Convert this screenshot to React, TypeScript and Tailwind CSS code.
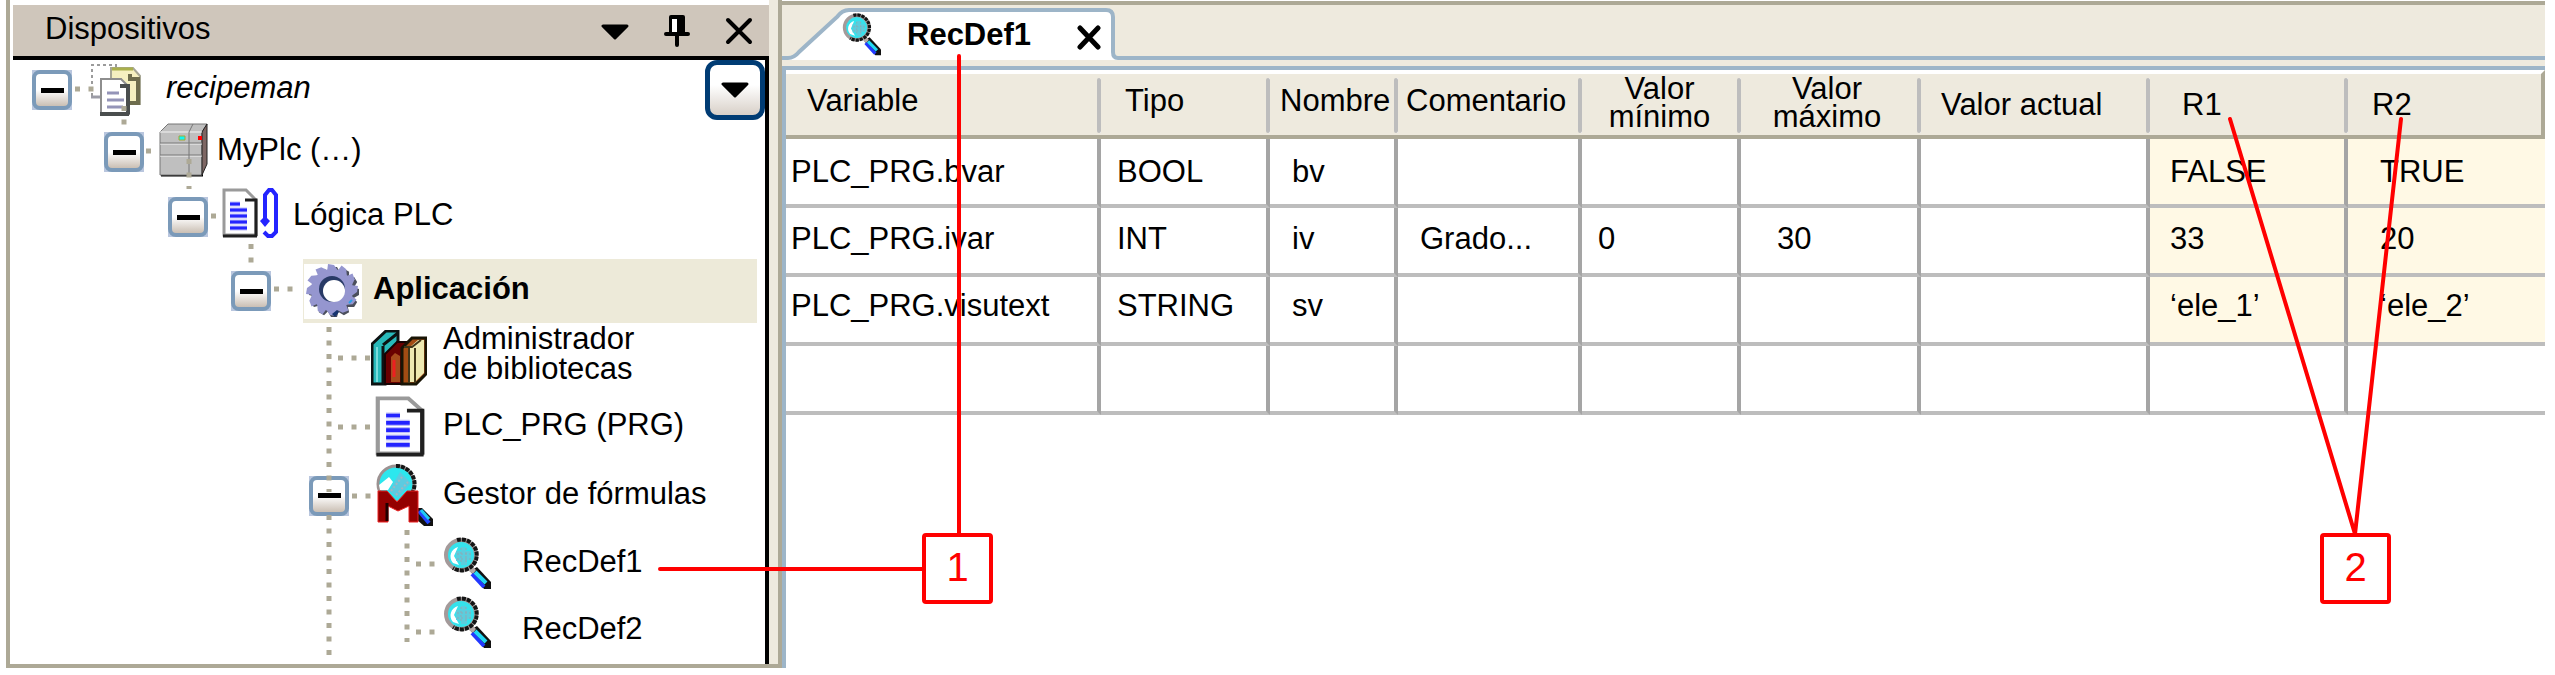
import { useState, type ReactNode } from 'react';
import clsx from 'clsx';

type Column = { key: string; label: string; head: string; body: string; recipe?: boolean };

const COLUMNS: Column[] = [
  { key: 'variable', label: 'Variable', head: 'w-[315px] pl-[21px] pb-2 text-left', body: 'pl-[5px]' },
  { key: 'type', label: 'Tipo', head: 'w-[169px] pl-6 pb-2 text-left', body: 'pl-4' },
  { key: 'name', label: 'Nombre', head: 'w-[128px] pl-2.5 pb-2 text-left', body: 'pl-[22px]' },
  { key: 'comment', label: 'Comentario', head: 'w-[184px] pl-2 pb-2 text-left', body: 'pl-[22px]' },
  { key: 'min', label: 'Valor mínimo', head: 'w-[159px] pl-3 pr-4 pb-1 text-center leading-[28px]', body: 'pl-4' },
  { key: 'max', label: 'Valor máximo', head: 'w-[180px] pl-6 pr-8 pb-1 text-center leading-[28px]', body: 'pl-9' },
  { key: 'current', label: 'Valor actual', head: 'w-[229px] pl-5 text-left', body: 'pl-5' },
  { key: 'r1', label: 'R1', head: 'w-[198px] pl-8 text-left', body: 'pl-5', recipe: true },
  { key: 'r2', label: 'R2', head: 'pl-6 text-left', body: 'pl-8', recipe: true },
];

const ROWS: { pad: string; values: Record<string, string> }[] = [
  { pad: 'pb-0', values: { variable: 'PLC_PRG.bvar', type: 'BOOL', name: 'bv', r1: 'FALSE', r2: 'TRUE' } },
  { pad: 'pb-1', values: { variable: 'PLC_PRG.ivar', type: 'INT', name: 'iv', comment: 'Grado...', min: '0', max: '30', r1: '33', r2: '20' } },
  { pad: 'pb-2', values: { variable: 'PLC_PRG.visutext', type: 'STRING', name: 'sv', r1: '‘ele_1’', r2: '‘ele_2’' } },
  { pad: 'pb-0', values: {} },
];

function Magnifier({ className }: { className: string }) {
  return (
    <svg className={className} viewBox="0 0 48 53" preserveAspectRatio="none" aria-hidden="true">
      <path d="M27 34L34 30L48 45V52H41Z" fill="#111" />
      <path d="M26 34l4-4 3 3-3 4z" fill="#b5a9a6" />
      <path d="M29 37L41 50" stroke="#2238ff" strokeWidth="4" />
      <path d="M32 35L43 46" stroke="#22d8f2" strokeWidth="4" />
      <circle cx="18" cy="18" r="15" fill="#35e2ec" stroke="#a49a9a" strokeWidth="4" />
      <path d="M14 3A15.500 15.500 0 1 1 10 31" fill="none" stroke="#151515" strokeWidth="4" strokeDasharray="4 1" />
      <path d="M15 10C8 12 5 20 10 26l6 2-5-9z" fill="#fff" />
      <path d="M13 14h5v-4h5v4h5v9h-4v5h-6v-4h-5z" fill="#5ccddd" />
      <path d="M14 17h14M14 22h14M18 11v16M23 11v16" stroke="#8fa9b5" strokeWidth="1" strokeDasharray="2 2" />
    </svg>
  );
}

function ProjectIcon() {
  return (
    <svg className="h-[52px] w-[50px]" viewBox="0 0 50 52" aria-hidden="true">
      <path d="M1 32V1h24v4" fill="none" stroke="#9b9b9b" strokeWidth="2" strokeDasharray="3 3" />
      <path d="M0 33h10" stroke="#9c9ca6" strokeWidth="3" />
      <path d="M20 4h22l7 8v28H20z" fill="#f5f0c0" stroke="#a7a795" strokeWidth="2" />
      <path d="M21 5h21M21 16h10" stroke="#aab04c" strokeWidth="3" />
      <path d="M39 10v5h8v24H38" fill="none" stroke="#6e6d4d" strokeWidth="4" />
      <path d="M10 15h20l8 8v27H10z" fill="#fff" stroke="#8e8e8e" strokeWidth="2" />
      <path d="M29 22h8v28M9 50h29" fill="none" stroke="#4a4e4e" strokeWidth="4" />
      <path d="M16 29h12M16 36h17M16 43h16" stroke="#9494b8" strokeWidth="3" />
    </svg>
  );
}

function PlcIcon() {
  return (
    <svg className="h-[54px] w-[50px]" viewBox="0 0 50 54" aria-hidden="true">
      <path d="M2 52h42" stroke="#000" strokeWidth="3" />
      <path d="M1 9L9 1h39l-5 8v43H1z" fill="#bfbfbf" stroke="#777" />
      <path d="M43 9l5-8v40l-5 11z" fill="#7d6663" stroke="#222" />
      <path d="M1 9h42M1 21h42M1 33h42" stroke="#f4f4f4" />
      <path d="M1 20h42M1 32h42M30 9v43M30 9l4-8" fill="none" stroke="#777" />
      <path d="M20 13h6v4h-6z" fill="#10f5f5" stroke="#a5a832" />
      <path d="M39 13h4v4h-4z" fill="#f00" />
    </svg>
  );
}

function DocPage({ logic }: { logic?: boolean }) {
  return (
    <svg className={logic ? 'h-[50px] w-[56px]' : 'h-[61px] w-[50px]'} viewBox={logic ? '0 0 56 50' : '0 0 36 50'} preserveAspectRatio="none" aria-hidden="true">
      <path d="M2 2h22l10 10v35H2z" fill="#fff" stroke="#9a9a9a" strokeWidth="3" />
      <path d="M23 12h11v36" fill="none" stroke="#202020" strokeWidth="3" />
      <path d="M1 48h34" stroke="#202020" strokeWidth="3" />
      <path d="M8 16h10M8 22h17M8 28h17M8 34h17M8 40h17" stroke="#bdbdf8" strokeWidth="5" />
      <path d="M8 16h10M8 22h17M8 28h17M8 34h17M8 40h17" stroke="#2424ff" strokeWidth="3" />
      {logic && (
        <>
          <path d="M43 34V7l4-5h3l4 5v37l-4 4h-4l-4-4" fill="none" stroke="#2424ff" strokeWidth="4" />
          <path d="M38 33l5-5 5 5-5 6z" fill="#2424ff" />
        </>
      )}
    </svg>
  );
}

function GearIcon() {
  const teeth = [0, 30, 60, 90, 120, 150, 180, 210, 240, 270, 300, 330];
  return (
    <svg className="h-[55px] w-[58px] bg-white" viewBox="0 0 58 55" aria-hidden="true">
      <g fill="#4b4f5c" transform="translate(2 2)">
        {teeth.map((a) => <path key={a} d="M23 8l2-7h6l4 7z" transform={`rotate(${a} 28 26)`} />)}
        <circle cx="28" cy="26" r="20" />
      </g>
      <g fill="#9596cf">
        {teeth.map((a) => <path key={a} d="M23 8l1-8 6 1 5 7z" transform={`rotate(${a} 28 26)`} />)}
        <circle cx="28" cy="26" r="21" />
      </g>
      <circle cx="28" cy="25" r="13" fill="#283a66" />
      <circle cx="30" cy="27" r="11" fill="#fff" />
      <path d="M28 50l5-4 2 2-4 5z" fill="#17346e" />
      <path d="M45 39l3-3" stroke="#2da1e8" strokeWidth="2" />
    </svg>
  );
}

function BooksIcon() {
  return (
    <svg className="h-[56px] w-[56px]" viewBox="0 0 56 56" aria-hidden="true">
      <path d="M1 14L15 1h12v18L14 34v20H1z" fill="#28b9ba" stroke="#0c1212" strokeWidth="3" />
      <path d="M6 17v35" stroke="#79dddd" strokeWidth="2" />
      <path d="M12 15L27 3M12 16v38" stroke="#0c1212" strokeWidth="3" />
      <path d="M14 24l12-12h9v42H14z" fill="#680000" stroke="#160404" strokeWidth="2" />
      <path d="M20 27l4-4 5 3v26h-9z" fill="#a64b1c" />
      <path d="M23 30v17" stroke="#ee2020" strokeWidth="3" />
      <path d="M31 18L41 8h14v36L45 54H31z" fill="#a34c13" stroke="#191405" strokeWidth="3" />
      <path d="M38 18l9-8h6v33l-9 9h-6z" fill="#eee9b1" />
      <path d="M33 17h8l9-7M44 18v35M38 18v35" fill="none" stroke="#423719" strokeWidth="2" />
    </svg>
  );
}

function RecipeManagerIcon() {
  return (
    <svg className="h-[63px] w-[58px]" viewBox="0 0 58 63" aria-hidden="true">
      <path d="M41 44h6l11 11v7h-9l-8-7z" fill="#111" />
      <path d="M44 47l10 12" stroke="#2145ff" strokeWidth="4" />
      <path d="M46 46l8 9" stroke="#20ccf4" strokeWidth="3" />
      <circle cx="21" cy="20" r="18" fill="#2ce7ee" stroke="#9c9191" strokeWidth="3" />
      <path d="M21 2a18 18 0 0 1 14 30" fill="none" stroke="#161616" strokeWidth="4" strokeDasharray="4 1" />
      <path d="M4 21l10-8 4 5-5 8H5z" fill="#fff" />
      <path d="M14 27L25 8l11 11-13 15z" fill="#5ccbe0" />
      <path d="M16 27l11-14M21 31l12-13" stroke="#a0b8c2" strokeWidth="2" strokeDasharray="2 2" />
      <path d="M3 27h9l10 11 10-11h11v31h-9V42L23 47 13 42v16H3z" fill="#940000" stroke="#e82323" strokeWidth="1" />
      <path d="M12 39v18" stroke="#200000" strokeWidth="3" />
    </svg>
  );
}

function Triangle() {
  return (
    <svg className="h-[17px] w-[28px]" viewBox="0 0 28 17" aria-hidden="true">
      <path d="M2 2h24L14 14z" stroke="#000" strokeWidth="3" strokeLinejoin="round" />
    </svg>
  );
}

function Toggle({ label }: { label: string }) {
  return (
    <button type="button" aria-label={`Contraer ${label}`} className="flex size-10 shrink-0 items-center justify-center bg-[#b9c6de]">
      <span className="flex size-10 items-center justify-center rounded-lg border-4 border-[#7b9ab9] bg-linear-to-b from-white from-50% to-[#cabfb4]">
        <span className="h-[5px] w-[23px] bg-black" />
      </span>
    </button>
  );
}

function TreeRow({ className, children }: { className: string; children: ReactNode }) {
  return (
    <li role="treeitem" className={clsx('flex items-center', className)}>
      {children}
    </li>
  );
}

// Dotted guides that join each toggle with its children
function TreeGuides() {
  return (
    <svg className="pointer-events-none absolute left-0 top-0 h-[605px] w-[500px]" fill="none" stroke="#ada996" strokeWidth="5" strokeDasharray="5 8.500" aria-hidden="true">
      <path d="M62 29h20M111 46v20M133 91h5M176 99v30M198 156h5M238 184v20" />
      <path d="M261 229h20M316 267v165M325 298h32M325 367h32M339 436h20M316 455v140" />
      <path d="M394 470v112M403 504h20M403 572h20" />
    </svg>
  );
}

function DevicesPanel() {
  return (
    <aside className="ml-1.5 w-[776px] shrink-0 border-4 border-t-0 border-[#ada996]">
      <div className="border-r-[9px] border-[#eeeade] pl-[3px] pt-[5px]">
        <header className="flex h-[51px] items-center bg-[#cfc6bb] pl-8 pr-4">
          <h2 className="flex-1 pb-1">Dispositivos</h2>
          <div className="flex items-center gap-[35px]">
            <button type="button" aria-label="Menú" className="pt-1"><Triangle /></button>
            <button type="button" aria-label="Fijar">
              <svg className="h-[34px] w-[26px]" viewBox="0 0 26 34" aria-hidden="true">
                <path d="M5 3q0-2 2-2h12q2 0 2 2v16h-16z" />
                <path d="M2 20h22M13 20v11" stroke="#000" strokeWidth="4" strokeLinecap="round" />
                <path d="M8 5h5v13H8z" fill="#fff" />
              </svg>
            </button>
            <button type="button" aria-label="Cerrar">
              <svg className="size-[28px]" viewBox="0 0 28 28" aria-hidden="true">
                <path d="M3 3l22 22M25 3L3 25" stroke="#000" strokeWidth="4" strokeLinecap="round" />
              </svg>
            </button>
          </div>
        </header>
        <div className="relative border-r-4 border-t-4 border-black">
          <ul role="tree" aria-label="Dispositivos">
            <TreeRow className="h-[60px] pl-[19px]">
              <Toggle label="recipeman" />
              <span className="ml-[19px]"><ProjectIcon /></span>
              <span className="ml-[25px] flex-1 pb-1 italic">recipeman</span>
              <button type="button" aria-label="Opciones del proyecto" className="flex size-[60px] items-center justify-center rounded-xl border-[5px] border-[#003c74] bg-linear-to-b from-white from-40% to-[#d8d0c8]">
                <Triangle />
              </button>
            </TreeRow>
            <TreeRow className="h-[64px] pl-[91px]">
              <Toggle label="MyPlc" />
              <span className="ml-[15px] mr-2 pb-1"><PlcIcon /></span>
              <span className="pb-1">MyPlc (…)</span>
            </TreeRow>
            <TreeRow className="h-[66px] pl-[155px]">
              <Toggle label="Lógica PLC" />
              <span className="ml-[14px] mr-[15px] pb-2"><DocPage logic /></span>
              <span className="pb-1">Lógica PLC</span>
            </TreeRow>
            <TreeRow className="mt-[9px] h-[64px] pl-[218px] pr-2">
              <Toggle label="Aplicación" />
              <span className="ml-8 flex h-[64px] flex-1 items-center bg-[#edead9] pl-px font-bold">
                <span className="mr-[11px]"><GearIcon /></span>
                <span className="pb-1">Aplicación</span>
              </span>
            </TreeRow>
            <TreeRow className="h-[69px] pl-[358px]">
              <BooksIcon />
              <span className="ml-4 pb-2 leading-[30px]">Administrador<br />de bibliotecas</span>
            </TreeRow>
            <TreeRow className="h-[69px] pl-[362px]">
              <DocPage />
              <span className="ml-[18px] pb-1">PLC_PRG (PRG)</span>
            </TreeRow>
            <TreeRow className="h-[69px] pl-[296px]">
              <Toggle label="Gestor de fórmulas" />
              <span className="ml-[26px] mr-[10px]"><RecipeManagerIcon /></span>
              <span className="pb-1">Gestor de fórmulas</span>
            </TreeRow>
            <TreeRow className="h-[67px] pl-[430px]">
              <Magnifier className="h-[53px] w-[48px]" />
              <span className="ml-[31px] pb-1">RecDef1</span>
            </TreeRow>
            <TreeRow className="h-[67px] pl-[430px]">
              <Magnifier className="-mt-4 h-[53px] w-[48px]" />
              <span className="ml-[31px] pb-1">RecDef2</span>
            </TreeRow>
          </ul>
          <TreeGuides />
        </div>
      </div>
    </aside>
  );
}

function TabStrip() {
  return (
    <div role="tablist" className="relative h-[55px] border-b-4 border-[#9db5c8] bg-[#eeeade]">
      <div className="relative flex h-[55px] w-[336px] items-center pl-[60px]">
        <svg className="absolute left-0 top-0 h-[55px] w-[336px]" viewBox="0 0 336 55" aria-hidden="true">
          <path d="M0 55v-2h6q6 0 11-6L55 12q5-7 12-7h257q7 0 7 7v35q0 6 5 6v2z" fill="#fff" />
          <path d="M0 53h6q6 0 11-6L55 12q5-7 12-7h257q7 0 7 7v35q0 6 5 6" fill="none" stroke="#9db5c8" strokeWidth="4" />
        </svg>
        <button type="button" role="tab" aria-selected="true" className="relative flex items-center pt-1 font-bold">
          <Magnifier className="mr-[26px] h-[43px] w-[39px]" />
          <span>RecDef1</span>
        </button>
        <button type="button" aria-label="Cerrar RecDef1" className="relative ml-auto mr-4 pt-2">
          <svg className="size-[26px]" viewBox="0 0 26 26" aria-hidden="true">
            <path d="M4 4l18 19M22 4L4 23" stroke="#000" strokeWidth="5" strokeLinecap="round" />
          </svg>
        </button>
      </div>
    </div>
  );
}

function RecipeTable() {
  return (
    <table className="w-full table-fixed border-separate border-spacing-0">
      <thead>
        <tr>
          {COLUMNS.map((col, i) => (
            <th
              key={col.key}
              scope="col"
              className={clsx(
                'relative h-[69px] border-b-4 border-t-4 border-b-[#ada996] border-t-white bg-[#eeeade] font-normal',
                i === COLUMNS.length - 1 && 'border-r-4 border-r-[#ada996]',
                col.head
              )}
            >
              {col.label}
              {i < COLUMNS.length - 1 && (
                <span className="absolute bottom-0.5 right-0 top-1 w-1 rounded-sm bg-[#bdbdbd] shadow-[2px_0_0_#fff]" />
              )}
            </th>
          ))}
        </tr>
      </thead>
      <tbody>
        {ROWS.map((row, r) => (
          <tr key={r}>
            {COLUMNS.map((col, i) => (
              <td
                key={col.key}
                className={clsx(
                  'h-[69px] border-b-4 border-b-[#bdbdbd] whitespace-nowrap',
                  i < COLUMNS.length - 1 && 'border-r-4 border-r-[#a5a5a5]',
                  col.recipe && r < 3 && 'bg-[#fff9e5]',
                  row.pad,
                  col.body
                )}
              >
                {row.values[col.key]}
              </td>
            ))}
          </tr>
        ))}
      </tbody>
    </table>
  );
}

function Callouts() {
  return (
    <div className="pointer-events-none absolute inset-0 text-[40px] leading-[50px] text-[#f00]">
      <svg className="absolute left-0 top-0 h-full w-full" fill="none" stroke="#f00" strokeWidth="4" strokeLinecap="round" aria-hidden="true">
        <path d="M959 56v478M660 569h263M2230 119l125 415M2401 119l-46 415" />
      </svg>
      <div className="absolute left-[922px] top-[533px] flex size-[71px] items-center justify-center rounded-sm border-4 border-[#f00] bg-white pb-1">1</div>
      <div className="absolute left-[2320px] top-[533px] flex size-[71px] items-center justify-center rounded-sm border-4 border-[#f00] bg-white pb-1">2</div>
    </div>
  );
}

export default function App() {
  const [activeDef] = useState('RecDef1');

  return (
    <div className="relative flex overflow-hidden bg-white pb-1 font-['Liberation_Sans',Arial,sans-serif] text-[31px] leading-[40px] text-black">
      <DevicesPanel />
      <main aria-label={activeDef} className="mr-[10px] flex min-w-0 flex-1 flex-col pt-px">
        <div className="border-t-4 border-[#ada996]">
          <TabStrip />
        </div>
        <div className="h-1.5 bg-[#eeeade]" />
        <div className="flex-1 border-l-4 border-t-4 border-[#9db5c8]">
          <RecipeTable />
        </div>
      </main>
      <Callouts />
    </div>
  );
}
